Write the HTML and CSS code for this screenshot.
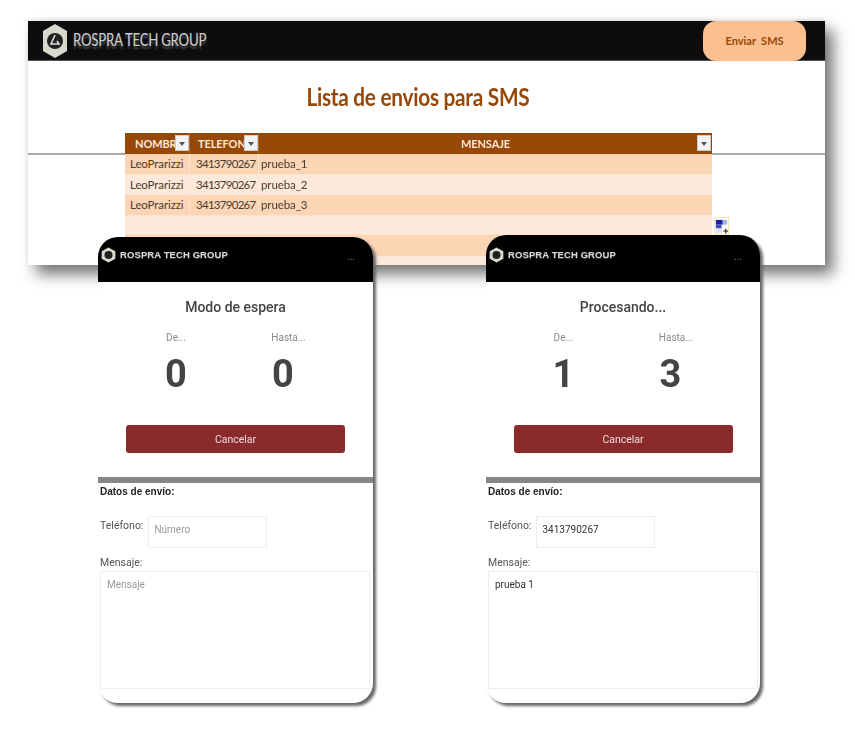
FILE: index.html
```html
<!DOCTYPE html>
<html lang="es">
<head>
<meta charset="utf-8">
<title>Lista de envios para SMS</title>
<link rel="stylesheet" href="styles.css">
</head>
<body>
<main class="canvas">
  <section class="sheet">
    <header class="sheet-bar">
      <svg class="logo-big" viewBox="0 0 26 36"><path d="M13 1 25 8v20L13 35 1 28V8z" fill="#d8d8cc"/><circle cx="13" cy="18" r="8" fill="#222"/><path d="M13 12l-4 9h8l-2-3" fill="none" stroke="#ddd" stroke-width="1.6"/></svg>
      <span class="brand-big">ROSPRA TECH GROUP</span>
      <span class="send">Enviar&nbsp; SMS</span>
    </header>
    <h1 class="sheet-title"><span class="title-text">Lista de envios para SMS</span></h1>
    <div class="rule"></div>
    <div class="table">
      <div class="row head">
        <div class="cell c1">NOMBR<i class="filter"></i></div>
        <div class="cell c2">TELEFON<i class="filter"></i></div>
        <div class="cell c3">MENSAJE<i class="filter"></i></div>
      </div>
      <div class="row dark"><div class="cell c1">LeoPrarizzi</div><div class="cell c2">3413790267</div><div class="cell c3">prueba_1</div></div>
      <div class="row light"><div class="cell c1">LeoPrarizzi</div><div class="cell c2">3413790267</div><div class="cell c3">prueba_2</div></div>
      <div class="row dark"><div class="cell c1">LeoPrarizzi</div><div class="cell c2">3413790267</div><div class="cell c3">prueba_3</div></div>
      <div class="row light short"><div class="cell c1"></div><div class="cell c2"></div><div class="cell c3"></div></div>
      <div class="row dark tall"><div class="cell c1"></div><div class="cell c2"></div><div class="cell c3"></div></div>
      <div class="row light"><div class="cell c1"></div><div class="cell c2"></div><div class="cell c3"></div></div>
    </div>
    <svg class="quick" viewBox="0 0 16 19"><rect x=".5" y=".5" width="15" height="18" fill="#fff" stroke="#f3e6a8"/><rect x="2" y="3" width="8" height="5" fill="#1c1c9c"/><rect x="9" y="3" width="5" height="5" fill="#9fb4e6"/><rect x="2" y="8" width="6" height="4" fill="#3d4fc0"/><rect x="2" y="13" width="6" height="4" fill="#ddd"/><path d="M10 15h5M12.500 12.500v5" stroke="#444" stroke-width="1.500"/></svg>
  </section>

  <section class="phone phone-a">
    <header class="phone-bar">
      <svg class="logo-small" viewBox="0 0 26 28"><path d="M13 1 25 7.500v13L13 27 1 20.500v-13z" fill="#d8d8cc"/><circle cx="13" cy="14" r="7" fill="#222"/></svg>
      <span class="brand-small">ROSPRA TECH GROUP</span>
      <span class="dots">...</span>
    </header>
    <div class="status">
      <h2 class="state">Modo de espera</h2>
      <div class="counts">
        <div class="count"><span class="count-label">De...</span><strong class="count-num">0</strong></div>
        <div class="count"><span class="count-label until">Hasta...</span><strong class="count-num">0</strong></div>
      </div>
      <div class="cancel">Cancelar</div>
    </div>
    <div class="details">
      <h3 class="details-title">Datos de envío:</h3>
      <div class="phone-field"><span class="field-label">Teléfono:</span><div class="input placeholder">Número</div></div>
      <span class="field-label msg-label">Mensaje:</span>
      <div class="textarea placeholder">Mensaje</div>
    </div>
  </section>

  <section class="phone phone-b">
    <header class="phone-bar">
      <svg class="logo-small" viewBox="0 0 26 28"><path d="M13 1 25 7.500v13L13 27 1 20.500v-13z" fill="#d8d8cc"/><circle cx="13" cy="14" r="7" fill="#222"/></svg>
      <span class="brand-small">ROSPRA TECH GROUP</span>
      <span class="dots">...</span>
    </header>
    <div class="status">
      <h2 class="state">Procesando...</h2>
      <div class="counts">
        <div class="count"><span class="count-label">De...</span><strong class="count-num">1</strong></div>
        <div class="count"><span class="count-label until">Hasta...</span><strong class="count-num">3</strong></div>
      </div>
      <div class="cancel">Cancelar</div>
    </div>
    <div class="details">
      <h3 class="details-title">Datos de envío:</h3>
      <div class="phone-field"><span class="field-label">Teléfono:</span><div class="input filled">3413790267</div></div>
      <span class="field-label msg-label">Mensaje:</span>
      <div class="textarea filled">prueba 1</div>
    </div>
  </section>
</main>
</body>
</html>
```
FILE: styles.css
```css
* { box-sizing: border-box; }
html, body { margin: 0; padding: 0; background: #fff; }
.canvas { position: relative; width: 855px; height: 729px; overflow: hidden; font-family: Roboto, sans-serif; }

/* spreadsheet window */
.sheet {
  position: absolute; left: 28px; top: 21px; width: 797px; height: 244px;
  background: #fff;
  box-shadow: 8px 9px 14px rgba(0,0,0,.55), 0 -2px 4px rgba(0,0,0,.08);
  font-family: Lato, sans-serif;
  filter: blur(.55px);
}
.sheet-bar { display: flex; align-items: center; height: 40px; background: #0d0d0d; border-bottom: 1px solid #555; padding-left: 14px; }
.logo-big { width: 26px; height: 36px; flex: none; }
.brand-big {
  margin-left: 5px; margin-top: -2px; font-size: 17px; color: #cfcfcf; letter-spacing: -.35px; white-space: nowrap;
  transform: scaleX(.78); transform-origin: left center;
  text-shadow: 0 3px 2px rgba(200,200,200,.35);
}
.send {
  margin-left: auto; margin-right: 19px; width: 103px; height: 40px; border-radius: 13px;
  background: #fcbf8f; color: #974706; font-size: 11px; font-weight: 700;
  display: flex; align-items: center; justify-content: center;
}
.sheet-title { margin: 21px 0 0; padding-right: 17px; text-align: center; font-size: 24px; line-height: 29px; font-weight: 700; color: #974706; }
.title-text { display: inline-block; letter-spacing: -.3px; transform: scaleX(.865); white-space: nowrap; }
.rule { position: absolute; left: 0; right: 0; top: 132px; height: 2px; background: #a9a9a9; }
.table { position: relative; margin: 22px 0 0 97px; width: 587px; height: 132px; overflow: hidden; color: #4a3a30; }
.row { display: flex; height: 20.500px; border-bottom: 1px solid #fbe3cf; }
.row.short { height: 19px; }
.row.tall { height: 22px; }
.row.head { height: 21px; background: #974706; border: 0; color: #fde9d9; font-weight: 700; }
.row.dark { background: #fcd5b4; }
.row.light { background: #fde9d9; }
.cell { position: relative; display: flex; align-items: center; padding-left: 5px; border-right: 1px solid #fbe3cf; overflow: hidden; white-space: nowrap; font-size: 11.500px; letter-spacing: -.1px; }
.head .cell { border-right: 1px solid #b5682c; padding-left: 10px; font-size: 11px; letter-spacing: -.1px; }
.c1 { width: 65px; }
.c2 { width: 69px; padding-left: 6px; letter-spacing: -.72px; }
.c3 { flex: 1; padding-left: 2px; border-right: 0; }
.head .c3 { justify-content: center; padding: 0; border-right: 0; }
.head .c2 { padding-left: 8px; }
.filter { position: absolute; right: 0; top: 2px; width: 14px; height: 16px; background: #f4f4f4; border: 1px solid #c9c9c9; }
.filter::after { content: ""; position: absolute; left: 3px; top: 6px; border: 3px solid transparent; border-top: 4px solid #555; border-bottom: 0; }
.head .c3 .filter { right: 1px; }
.quick { position: absolute; left: 686px; top: 196px; width: 15px; height: 18px; }

/* phones */
.phone {
  position: absolute; width: 275px; background: #fff; border-radius: 20px; overflow: hidden;
  box-shadow: 3px 3px 3px #666;
  filter: blur(.45px);
}
.phone-a { left: 98px; top: 237px; height: 466px; }
.phone-b { left: 486px; top: 235px; width: 274px; height: 468px; }
.phone-bar { display: flex; align-items: flex-start; background: #000; padding: 10px 18px 0 3px; height: 45px; }
.phone-b .phone-bar { height: 47px; padding-top: 12px; }
.logo-small { width: 15px; height: 16px; flex: none; }
.brand-small { margin-left: 4px; font-size: 9.500px; line-height: 16px; font-weight: 700; letter-spacing: .1px; color: #d8d8d8; font-family: "Liberation Sans", sans-serif; white-space: nowrap; text-shadow: 0 1px 1px rgba(180,180,180,.4); }
.dots { margin-left: auto; color: #777; font-size: 10px; line-height: 20px; }
.status { height: 195px; padding-top: 17px; display: flex; flex-direction: column; align-items: center; }
.state { margin: 0; font-size: 14px; line-height: 16px; font-weight: 500; color: #444; }
.counts { display: flex; width: 214px; margin: 17px 12px 0 0; justify-content: space-between; }
.count { width: 107px; display: flex; flex-direction: column; align-items: center; }
.count-label { font-size: 10px; line-height: 12px; color: #8a8a8a; }
.count-label.until { margin-left: 11px; }
.count-num { margin-top: 5px; font-size: 38px; line-height: 50px; font-weight: 700; color: #444; }
.cancel { margin-top: 26px; width: 219px; height: 28px; background: #8b2a2a; border-radius: 3px; color: #f0dcdc; font-size: 10.500px; display: flex; align-items: center; justify-content: center; flex: none; }
.details { border-top: 6px solid #868686; padding: 3px 3px 0 2px; display: flex; flex-direction: column; }
.details-title { margin: 0; font-size: 10px; line-height: 12px; font-weight: 700; color: #222; font-family: "Liberation Sans", sans-serif; }
.phone-field { display: flex; align-items: flex-start; margin-top: 18px; }
.field-label { font-size: 10.500px; line-height: 12px; color: #555; padding-top: 4px; }
.input { margin-left: 5px; width: 119px; height: 32px; border: 1px solid #eee; padding: 7px 5px 0; font-size: 10px; line-height: 12px; }
.msg-label { margin-top: 6px; padding-top: 3px; }
.textarea { margin-top: 2px; width: 270px; height: 118px; border: 1px solid #eee; padding: 7px 6px; font-size: 10px; line-height: 12px; }
.placeholder { color: #999; }
.filled { color: #333; }
```
